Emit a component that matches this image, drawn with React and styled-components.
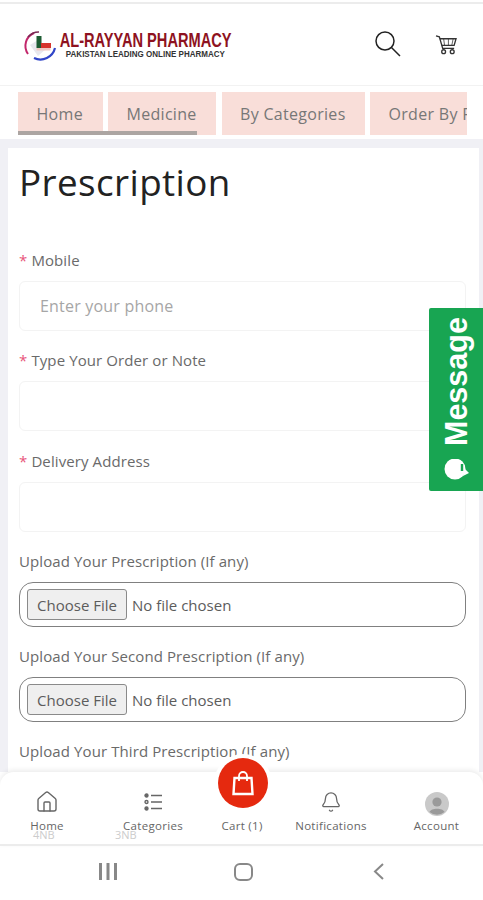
import React from "react";
import styled, { createGlobalStyle } from "styled-components";
import { House, Bell } from "lucide-react";

const GlobalStyle = createGlobalStyle`
    * { box-sizing: border-box; }
    html, body { margin: 0; padding: 0; background: #fff; }
    body { font-family: "Open Sans", "Noto Sans", sans-serif; color: #666; }
`;

const tabs = [
    { label: "Home", width: 84.5 },
    { label: "Medicine", width: 108 },
    { label: "By Categories", width: 143 },
    { label: "Order By Prescription", width: 190 },
];

const fields = [
    { label: "Mobile", placeholder: "Enter your phone" },
    { label: "Type Your Order or Note" },
    { label: "Delivery Address" },
];

const uploads = ["Upload Your Prescription (If any)", "Upload Your Second Prescription (If any)"];

function Logo() {
    return <LogoWrap>
        <svg width="36" height="32" viewBox="0 0 36 32">
            <path d="M12 4 A14 14 0 0 0 6 25" fill="none" stroke="#c2276b" strokeWidth="2" />
            <path d="M6 8 A14 14 0 0 1 17 3" fill="none" stroke="#7a2a55" strokeWidth="1.5" />
            <path d="M12 29 A15 15 0 0 0 33 19" fill="none" stroke="#3146c8" strokeWidth="2.2" />
            <path d="M8 16 L16 11 L24 20 L16 27 Z" fill="#e8e8ee" />
            <rect x="14.5" y="7" width="5" height="12" fill="#1d5c33" />
            <rect x="19" y="14" width="10" height="5" fill="#d6342c" />
            <rect x="14.5" y="19" width="14" height="2.5" fill="#f2c8c2" />
        </svg>
        <LogoText>
            <LogoTitle>AL-RAYYAN PHARMACY</LogoTitle>
            <LogoSub>PAKISTAN LEADING ONLINE PHARMACY</LogoSub>
        </LogoText>
    </LogoWrap>;
}

function SearchIcon() {
    return <SearchSvg width="26" height="26" viewBox="0 0 26 26" fill="none" stroke="#222" strokeWidth="1.5">
        <circle cx="10" cy="10" r="9" />
        <path d="M16.5 16.5 L25 25" />
    </SearchSvg>;
}

function CartIcon() {
    return <svg width="23" height="21" viewBox="0 0 24 22" fill="none" stroke="#333" strokeWidth="1.4">
        <path d="M1 2 L4.5 3 L8 15 L20 15" />
        <path d="M5 5 L22 5 L20 12 L7 12" />
        <path d="M9 5 L10 12 M14 5 L14 12 M19 5 L17.5 12" strokeWidth="0.8" />
        <circle cx="9" cy="18.5" r="2" />
        <circle cx="18" cy="18.5" r="2" />
    </svg>;
}

function ListIcon() {
    return <svg width="19" height="18" viewBox="0 0 19 18" fill="none" stroke="#666" strokeWidth="1.4">
        <circle cx="2.5" cy="2.5" r="1.5" fill="#666" />
        <circle cx="2.5" cy="9" r="1.5" />
        <circle cx="2.5" cy="15.5" r="1.5" fill="#666" />
        <path d="M7 2.5 H18 M7 9 H18 M7 15.5 H18" />
    </svg>;
}

function AvatarIcon() {
    return <svg width="24" height="24" viewBox="0 0 24 24">
        <circle cx="12" cy="12" r="12" fill="#c9c9c9" />
        <circle cx="12" cy="10" r="4.6" fill="#9a9a9a" />
        <path d="M4.5 20 C6 15.5 18 15.5 19.5 20 A12 12 0 0 1 4.5 20 Z" fill="#9a9a9a" />
    </svg>;
}

function BagIcon() {
    return <svg width="24" height="26" viewBox="0 0 24 26" fill="none" stroke="#fff" strokeWidth="2.4">
        <path d="M3.5 8 H20.5 L21.5 24 H2.5 Z" />
        <path d="M8 11 V6 A4 4 0 0 1 16 6 V11" strokeWidth="1.8" />
    </svg>;
}

// drawn the way up it ends up after the tab's 180 degree turn
function ChatDot() {
    return <svg width="26" height="22" viewBox="0 0 26 22">
        <circle cx="14" cy="12" r="10.5" fill="#fff" />
        <path d="M0 8 L6 5 L5 13 Z" fill="#fff" />
        <path d="M7 10 V17" stroke="#18a552" strokeWidth="2.4" />
    </svg>;
}

function App() {
    return <Screen>
        <GlobalStyle />
        <TopLine />
        <Header>
            <Logo />
            <HeaderIcons>
                <SearchIcon />
                <CartIcon />
            </HeaderIcons>
        </Header>
        <TabBar>
            <TabTrack>
                {tabs.map((tab) => <Tab key={tab.label} $width={tab.width}>{tab.label}</Tab>)}
            </TabTrack>
            <TabUnderline />
        </TabBar>
        <Main>
            <Card>
                <Title>Prescription</Title>
                <Form>
                    {fields.map((field) => <Field key={field.label}>
                        <Label><Star>*</Star> {field.label}</Label>
                        <TextBox>{field.placeholder}</TextBox>
                    </Field>)}
                    {uploads.map((label) => <UploadField key={label}>
                        <Label>{label}</Label>
                        <FileBox>
                            <FileButton>Choose File</FileButton>
                            <span>No file chosen</span>
                        </FileBox>
                    </UploadField>)}
                    <Label>Upload Your Third Prescription (If any)</Label>
                </Form>
            </Card>
        </Main>
        <MessageTab>
            <ChatDot />
            Message
        </MessageTab>
        <BottomNav>
            <NavItem>
                <NavIcon><House size={24} strokeWidth={1.4} color="#666" /></NavIcon>
                <NavLabel>Home</NavLabel>
                <NavGhost>4NB</NavGhost>
            </NavItem>
            <NavItem>
                <NavIcon><ListIcon /></NavIcon>
                <NavLabel>Categories</NavLabel>
                <NavGhost $left>3NB</NavGhost>
            </NavItem>
            <NavItem>
                <CartBubble><BagIcon /></CartBubble>
                <NavLabel>Cart (1)</NavLabel>
            </NavItem>
            <NavItem>
                <NavIcon><Bell size={22} strokeWidth={1.4} color="#666" /></NavIcon>
                <NavLabel>Notifications</NavLabel>
            </NavItem>
            <NavItem>
                <NavIcon $drop><AvatarIcon /></NavIcon>
                <NavLabel>Account</NavLabel>
            </NavItem>
        </BottomNav>
        <SystemBar>
            <svg width="18" height="17" viewBox="0 0 18 17" fill="#888">
                <rect x="0" width="3" height="17" />
                <rect x="7.5" width="3" height="17" />
                <rect x="15" width="3" height="17" />
            </svg>
            <svg width="19" height="18" viewBox="0 0 19 18" fill="none" stroke="#888" strokeWidth="2">
                <rect x="1" y="1" width="17" height="16" rx="5" />
            </svg>
            <svg width="11" height="17" viewBox="0 0 11 17" fill="none" stroke="#888" strokeWidth="2">
                <path d="M10 1 L2 8.5 L10 16" />
            </svg>
        </SystemBar>
    </Screen>;
}

export default App;

const Screen = styled.div`
    position: relative;
    width: 483px;
    height: 900px;
    display: flex;
    flex-direction: column;
    overflow: hidden;
    background: #fff;
`;

const TopLine = styled.div`
    height: 4px;
    border-top: 2px solid #fff;
    background: #ececec;
    flex-shrink: 0;
`;

const Header = styled.header`
    height: 82px;
    flex-shrink: 0;
    display: flex;
    align-items: center;
    justify-content: space-between;
    padding: 0 25px 0 22px;
    border-bottom: 1px solid #f2f2f2;
`;

const LogoWrap = styled.div`
    display: flex;
    align-items: center;
    gap: 2px;
`;

const LogoText = styled.div`
    width: 172px;
    display: flex;
    flex-direction: column;
    align-items: center;
`;

const LogoTitle = styled.div`
    font-family: "Liberation Sans", sans-serif;
    font-weight: 700;
    font-size: 20px;
    line-height: 19px;
    color: #8e1220;
    white-space: nowrap;
    transform: scaleX(0.73);
`;

const LogoSub = styled.div`
    font-family: "Liberation Sans", sans-serif;
    font-weight: 700;
    font-size: 9px;
    line-height: 9px;
    color: #333;
    white-space: nowrap;
    transform: translateX(-1px) scaleX(0.89);
`;

const HeaderIcons = styled.div`
    display: flex;
    align-items: center;
    gap: 34px;
`;

const SearchSvg = styled.svg`
    margin-top: -2px;
`;

const TabBar = styled.nav`
    position: relative;
    height: 53px;
    flex-shrink: 0;
    padding: 6px 16px 0 18px;
`;

const TabTrack = styled.div`
    display: flex;
    gap: 5.5px;
    overflow: hidden;
`;

const Tab = styled.div`
    width: ${(p) => p.$width}px;
    flex-shrink: 0;
    height: 43px;
    display: flex;
    align-items: center;
    padding-left: 18.5px;
    background: #f9ded9;
    color: #777;
    font-size: 16px;
    font-weight: 500;
    letter-spacing: 0.3px;
    white-space: nowrap;
    overflow: hidden;
`;

const TabUnderline = styled.div`
    position: absolute;
    left: 18px;
    top: 45px;
    width: 179px;
    height: 4px;
    background: #aca5a2;
`;

const Main = styled.main`
    flex: 1;
    min-height: 0;
    overflow: hidden;
    background: #f0f0f5;
    padding: 9px 4px 0 8px;
`;

const Card = styled.section`
    height: 100%;
    background: #fff;
    padding: 12px 13px 0 11px;
`;

const Title = styled.h1`
    margin: 0;
    font-size: 36.8px;
    line-height: 44px;
    font-weight: 400;
    color: #222;
    letter-spacing: 0.4px;
`;

const Form = styled.form`
    display: flex;
    flex-direction: column;
    margin-top: 44.5px;
`;

const Field = styled.div`
    display: flex;
    flex-direction: column;
    gap: 10px;
    margin-bottom: 18.67px;
`;

const UploadField = styled(Field)`
    margin-bottom: 18px;
`;

const Label = styled.label`
    font-size: 15px;
    line-height: 22px;
    color: #6a6a6a;
    letter-spacing: 0.1px;
    white-space: nowrap;
`;

const Star = styled.span`
    color: #e8557a;
`;

const TextBox = styled.div`
    height: 50px;
    display: flex;
    align-items: center;
    padding-left: 20px;
    background: #fff;
    border: 1px solid #f3f3f3;
    border-radius: 6px;
    font-size: 16px;
    letter-spacing: 0.2px;
    color: #a6a6a6;
`;

const FileBox = styled.div`
    height: 45px;
    display: flex;
    align-items: center;
    gap: 5px;
    padding-left: 7px;
    border: 1px solid #808080;
    border-radius: 14px;
    font-size: 15px;
    color: #5c5c5c;
`;

const FileButton = styled.div`
    width: 100px;
    height: 31px;
    display: flex;
    align-items: center;
    justify-content: center;
    background: #efefef;
    border: 1px solid #8a8a8a;
    border-radius: 3px;
    color: #5c5c5c;
`;

const MessageTab = styled.div`
    position: absolute;
    right: 0;
    top: 308px;
    width: 54px;
    height: 183px;
    display: flex;
    align-items: center;
    justify-content: center;
    gap: 13px;
    writing-mode: vertical-rl;
    transform: rotate(180deg);
    background: #18a552;
    border-radius: 0 2px 2px 0;
    color: #fff;
    font-family: "Liberation Sans", Arial, sans-serif;
    font-weight: 700;
    font-size: 30.5px;
`;

const BottomNav = styled.div`
    position: relative;
    height: 74px;
    flex-shrink: 0;
    display: grid;
    grid-template-columns: 94px 118px 60px 118px 93px;
    background: #fff;
    border-radius: 14px 14px 0 0;
    border-bottom: 2px solid #ececec;
    box-shadow: 0 -2px 5px rgba(0, 0, 0, 0.08);
`;

const NavItem = styled.div`
    position: relative;
    display: flex;
    flex-direction: column;
    align-items: center;
    justify-content: flex-end;
    padding-bottom: 11px;
    gap: 4px;
`;

const NavIcon = styled.div`
    height: 24px;
    display: flex;
    align-items: center;
    justify-content: center;
    transform: translateY(${(p) => (p.$drop ? "2px" : "0")});
`;

const NavLabel = styled.span`
    font-size: 11.5px;
    line-height: 15px;
    color: #666;
    letter-spacing: 0.3px;
    white-space: nowrap;
`;

const NavGhost = styled.span`
    position: absolute;
    left: ${(p) => (p.$left ? "21px" : "33px")};
    bottom: 3px;
    font-size: 11px;
    line-height: 13px;
    color: #ccc;
`;

const CartBubble = styled.div`
    position: absolute;
    left: 31px;
    top: -14px;
    transform: translateX(-50%);
    width: 50px;
    height: 50px;
    display: flex;
    align-items: center;
    justify-content: center;
    border-radius: 50%;
    background: #e5290f;
    box-shadow: 0 0 0 4px #fff;
`;

const SystemBar = styled.div`
    flex: 1;
    min-height: 54px;
    max-height: 54px;
    display: flex;
    align-items: center;
    gap: 117px;
    padding: 0 0 3px 99px;
    background: #fff;

    svg:last-child {
        margin-left: 3px;
    }
`;
